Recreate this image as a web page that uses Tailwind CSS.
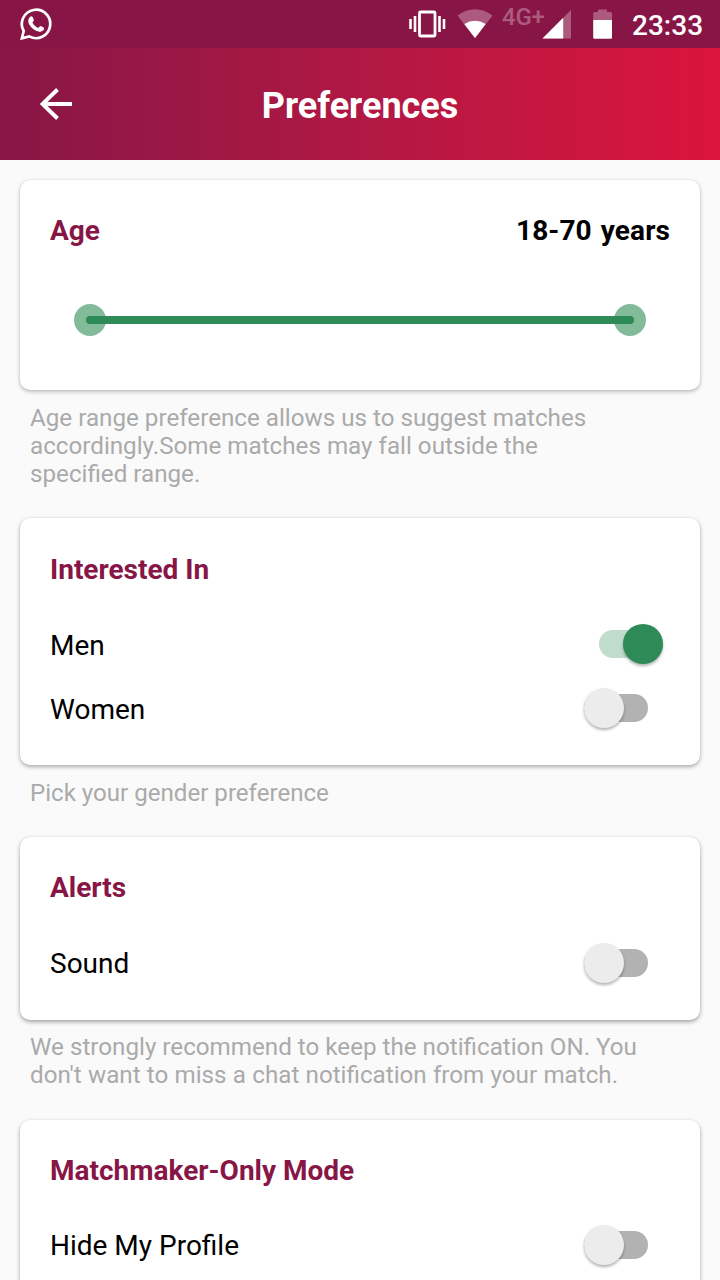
<!DOCTYPE html>
<html lang="en">
<head>
<meta charset="utf-8">
<title>Preferences</title>
<script src="https://cdn.jsdelivr.net/npm/@tailwindcss/browser@4"></script>
</head>
<body class="w-[720px] h-[1280px] overflow-hidden bg-[#fafafa] font-['Roboto',sans-serif] text-[28px] leading-[33px] text-black">
<div class="h-[48px] bg-[#871646] flex items-center text-white">
  <svg class="ml-[20px] w-[32px] h-[32px] shrink-0" viewBox="0 0 32 32">
    <path d="M1.900 30.300 3.700 23A14.200 14.200 0 1 1 9.200 28.400Z" fill="none" stroke="#fff" stroke-width="2.700"/>
    <path d="M10.200 8.800c.8-.8 2-.7 2.400.2l1.200 2.800c.2.600 0 1.100-1.400 2.700 1.600 2.900 3.700 4.500 6.100 5.500.9-1 1.500-2.100 2.200-1.900l2.900 1.400c.6.300.6.800.3 1.800-.7 2-3.200 2.900-5.200 2.300-5.300-1.500-8.500-4.900-10.100-8.700-.8-2.200-.1-4.600 1.600-6.100Z" fill="#fff"/>
  </svg>
  <svg class="ml-[356px] w-[38px] h-[30px] shrink-0" viewBox="408 9 38 30">
    <rect x="419.500" y="12" width="15.500" height="24" rx="1" fill="none" stroke="#fff" stroke-width="2.800"/>
    <path d="M410.500 19v10M415 16v16M439.500 16v16M444 19v10" stroke="#fff" stroke-width="2.600"/>
  </svg>
  <svg class="ml-[11px] w-[36px] h-[30px] shrink-0" viewBox="457 9 36 30">
    <path d="M475 38.500 457.500 15.500Q475 3 492.500 15.500Z" fill="#ac5b7e"/>
    <path d="M475 38 464.300 24Q475 17.500 485.700 24Z" fill="#fff"/>
  </svg>
  <span class="ml-[9px] mb-[14px] w-[40px] shrink-0 text-[24px] leading-[24px] tracking-[-0.2px] font-medium text-[#ac5b7e] whitespace-nowrap">4G+</span>
  <svg class="w-[29px] h-[30px] shrink-0" viewBox="542 10 29 30">
    <path d="M542.500 39.500 571 11V39.500Z" fill="#ac5b7e"/>
    <path d="M542.500 39.500 563.200 18.800V39.500Z" fill="#fff"/>
  </svg>
  <svg class="ml-[22px] w-[19px] h-[30px] shrink-0" viewBox="593 9 19 30">
    <path d="M593.200 20v-6.500q0-1.500 1.500-1.500H598V9.500h9V12h3.500q1.500 0 1.500 1.500V20Z" fill="#ac5b7e"/>
    <path d="M593.200 20H612v17.500q0 1.300-1.300 1.300H594.500q-1.300 0-1.300-1.300Z" fill="#fff"/>
  </svg>
  <span class="ml-[20px] mt-[2px] text-[28px] font-medium">23:33</span>
</div>
<header class="h-[112px] bg-linear-to-r from-[#871646] to-[#dc143c] grid grid-cols-[112px_1fr_112px] items-center text-white">
  <svg class="ml-[40px] w-[34px] h-[34px]" viewBox="40 87 34 34"><path d="M72 104H43M57.500 89.500 42.500 104 57.500 118.500" fill="none" stroke="#fff" stroke-width="4"/></svg>
  <h1 class="text-center text-[36px] leading-[42px] font-bold pt-[4px]">Preferences</h1>
</header>
<main class="px-5 pt-5">
  <section class="h-[210px] rounded-[10px] bg-white px-[30px] pt-[34px] shadow-[0_2px_4px_rgba(0,0,0,0.23),0_0_2px_rgba(0,0,0,0.16)]">
    <div class="flex justify-between font-bold"><h2 class="text-[#871646]">Age</h2><span class="word-spacing [word-spacing:2px] tracking-[0.1px]">18-70 years</span></div>
    <svg class="block mt-[57px] ml-[24px] w-[572px] h-[32px]" viewBox="0 0 572 32">
      <circle cx="16" cy="16" r="16" fill="#82bb9a"/><circle cx="556" cy="16" r="16" fill="#82bb9a"/>
      <rect x="12" y="12" width="548" height="8" rx="4" fill="#2e8b57"/>
    </svg>
  </section>
  <p class="px-[10px] pt-[14px] pb-[30px] text-[24.2px] leading-[28px] text-[#aaa]">Age range preference allows us to suggest matches<br>accordingly.Some matches may fall outside the<br>specified range.</p>
  <section class="h-[247px] rounded-[10px] bg-white px-[30px] pt-[35px] shadow-[0_2px_4px_rgba(0,0,0,0.3),0_0_2px_rgba(0,0,0,0.1)]">
    <h2 class="font-bold text-[#871646] mb-[26px]">Interested In</h2>
    <div class="h-[64px] flex items-center justify-between"><span class="pt-[2px]">Men</span>
      <div class="mr-[7px] w-[64px] h-[40px] flex items-center"><div class="w-full h-[28px] rounded-full bg-[#c0dccd] flex items-center justify-end"><div class="size-[40px] shrink-0 rounded-full bg-[#2e8b57] shadow-[0_2px_3px_rgba(0,0,0,0.3)]"></div></div></div>
    </div>
    <div class="h-[64px] flex items-center justify-between"><span class="pt-[2px]">Women</span>
      <div class="mr-[22.5px] w-[64px] h-[40px] flex items-center"><div class="w-full h-[28px] rounded-full bg-[#b2b2b2] flex items-center"><div class="size-[40px] shrink-0 rounded-full bg-[#ececec] shadow-[0_2px_3px_rgba(0,0,0,0.3)]"></div></div></div>
    </div>
  </section>
  <p class="px-[10px] pt-[14px] pb-[30px] text-[24.1px] leading-[28px] text-[#aaa]">Pick your gender preference</p>
  <section class="h-[182.500px] rounded-[10px] bg-white px-[30px] pt-[34px] shadow-[0_2px_4px_rgba(0,0,0,0.34),0_0_2px_rgba(0,0,0,0.08)]">
    <h2 class="font-bold text-[#871646] mb-[27px]">Alerts</h2>
    <div class="h-[64px] flex items-center justify-between"><span>Sound</span>
      <div class="mr-[22.5px] w-[64px] h-[40px] flex items-center"><div class="w-full h-[28px] rounded-full bg-[#b2b2b2] flex items-center"><div class="size-[40px] shrink-0 rounded-full bg-[#ececec] shadow-[0_2px_3px_rgba(0,0,0,0.3)]"></div></div></div>
    </div>
  </section>
  <p class="px-[10px] pt-[13px] pb-[31px] text-[24.2px] leading-[28px] text-[#aaa]">We strongly recommend to keep the notification ON. You<br><span class="[word-spacing:0.25px]">don't want to miss a chat notification from your match.</span></p>
  <section class="h-[247px] rounded-[10px] bg-white px-[30px] pt-[34px] shadow-[0_2px_4px_rgba(0,0,0,0.34),0_0_2px_rgba(0,0,0,0.06)]">
    <h2 class="font-bold text-[#871646] mb-[26.5px]">Matchmaker-Only Mode</h2>
    <div class="h-[64px] flex items-center justify-between"><span>Hide My Profile</span>
      <div class="mr-[22.5px] w-[64px] h-[40px] flex items-center"><div class="w-full h-[28px] rounded-full bg-[#b2b2b2] flex items-center"><div class="size-[40px] shrink-0 rounded-full bg-[#ececec] shadow-[0_2px_3px_rgba(0,0,0,0.3)]"></div></div></div>
    </div>
  </section>
</main>
</body>
</html>
